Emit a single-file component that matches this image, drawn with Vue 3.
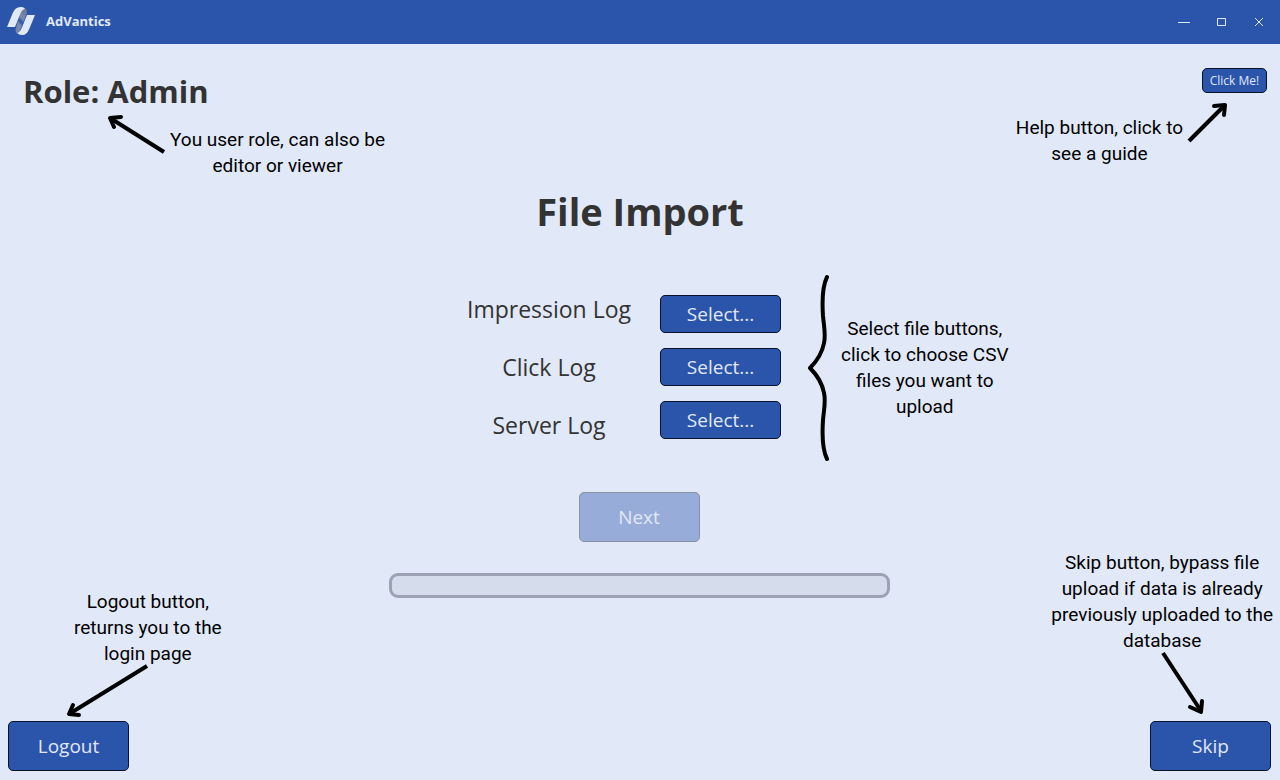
<script setup>
const logs = ['Impression Log', 'Click Log', 'Server Log']
const fileId = (name) => name.toLowerCase().replace(' ', '-')
</script>

<template>
  <div class="app">
    <header class="titlebar">
      <svg class="logo" width="28" height="28" viewBox="0 0 84 84" aria-hidden="true">
        <defs>
          <linearGradient id="fold" x1="0.7" y1="0" x2="0.3" y2="1">
            <stop offset="0" stop-color="#6a7892" />
            <stop offset="0.35" stop-color="#7c8bae" />
            <stop offset="0.52" stop-color="#2a55ab" />
            <stop offset="0.65" stop-color="#7c8bae" />
            <stop offset="1" stop-color="#7583a2" />
          </linearGradient>
        </defs>
        <path d="M42 8 L53 4 Q62 8 59 21 L41 66 Q37 78 44 84 L31 80 Q23 74 27 62 Z" fill="url(#fold)" />
        <path d="M0 60 L17 19 Q25 0 40 0 L45 0 Q52 1 54 6 Q45 8 40 20 L24 60 Z" fill="#e1e8f7" />
        <path d="M84 24 L67 65 Q59 84 46 84 Q36 84 31 78 Q39 76 44 64 L60 24 Z" fill="#e1e8f7" />
      </svg>
      <span class="brand">AdVantics</span>
      <div class="window-controls">
        <button type="button" aria-label="Minimize">
          <svg width="12" height="12" viewBox="0 0 12 12"><path d="M0 7.5H12" /></svg>
        </button>
        <button type="button" aria-label="Maximize">
          <svg width="12" height="12" viewBox="0 0 12 12"><path d="M1.5 3.5h8v7h-8z" /></svg>
        </button>
        <button type="button" aria-label="Close">
          <svg width="12" height="12" viewBox="0 0 12 12"><path d="M1 3l8 8M9 3l-8 8" /></svg>
        </button>
      </div>
    </header>

    <main class="page">
      <div class="top-row">
        <div class="anchor">
          <h2 class="role">Role: Admin</h2>
          <div class="note role-note">
            <svg width="60" height="42" viewBox="0 0 60 42" aria-hidden="true">
              <path class="shaft" d="M58 39L4 5" />
              <path class="head" d="M15 4L4 5L8 14" />
            </svg>
            <p>You user role, can also be<br />editor or viewer</p>
          </div>
        </div>
        <div class="anchor">
          <button type="button" class="btn help">Click Me!</button>
          <div class="note help-note">
            <p>Help button, click to<br />see a guide</p>
            <svg width="42" height="42" viewBox="0 0 42 42" aria-hidden="true">
              <path class="shaft" d="M2 40L38 4" />
              <path class="head" d="M27 5L38 4L37 14" />
            </svg>
          </div>
        </div>
      </div>

      <h1 class="title">File Import</h1>

      <form class="import" @submit.prevent>
        <div class="labels">
          <label v-for="log in logs" :key="log" :for="fileId(log)">{{ log }}</label>
        </div>
        <div class="selectors anchor">
          <button v-for="log in logs" :id="fileId(log)" :key="log" type="button" class="btn select">Select...</button>
          <div class="note select-note">
            <svg width="22" height="188" viewBox="0 0 22 188" aria-hidden="true">
              <path
                class="brace"
                d="M19 3C14 13 14 27 15 42C16 53 18 61 16 69C14 80 9 87 2 94C9 101 14 108 16 119C18 127 16 135 15 146C14 161 14 175 19 185"
              />
            </svg>
            <p>Select file buttons,<br />click to choose CSV<br />files you want to<br />upload</p>
          </div>
        </div>
      </form>

      <button type="button" class="btn tall" disabled>Next</button>
      <div class="progress" role="progressbar" aria-label="Upload progress" aria-valuenow="0"></div>

      <footer class="bottom-row">
        <div class="anchor">
          <button type="button" class="btn tall">Logout</button>
          <div class="note logout-note">
            <p>Logout button,<br />returns you to the<br />login page</p>
            <svg width="84" height="54" viewBox="0 0 84 54" aria-hidden="true">
              <path class="shaft" d="M82 2L4 50" />
              <path class="head" d="M8 41L4 50L14 51" />
            </svg>
          </div>
        </div>
        <div class="anchor">
          <button type="button" class="btn tall">Skip</button>
          <div class="note skip-note">
            <p>Skip button, bypass file<br />upload if data is already<br />previously uploaded to the<br />database</p>
            <svg width="44" height="64" viewBox="0 0 44 64" aria-hidden="true">
              <path class="shaft" d="M2 2L40 60" />
              <path class="head" d="M29 56L40 61L41 50" />
            </svg>
          </div>
        </div>
      </footer>
    </main>
  </div>
</template>

<style>
body {
  margin: 0;
  background: #e1e8f7;
}
</style>

<style scoped>
.app {
  min-height: 100vh;
  display: flex;
  flex-direction: column;
  background: #e1e8f7;
  color: #333;
  font-family: "Open Sans", "Noto Sans", sans-serif;
}

h1,
h2,
p {
  margin: 0;
}

.titlebar {
  display: flex;
  align-items: center;
  box-sizing: border-box;
  height: 44px;
  padding: 0 8px 2px 7px;
  background: #2a55ab;
  color: #e1e8f7;
}

.brand {
  margin-left: 11px;
  font-size: 13px;
  font-weight: 700;
}

.window-controls {
  display: flex;
  gap: 14px;
  margin-left: auto;
}

.window-controls button {
  display: flex;
  align-items: center;
  justify-content: center;
  width: 24px;
  height: 24px;
  padding: 0;
  border: 0;
  background: none;
}

.window-controls svg {
  fill: none;
  stroke: #e1e8f7;
  stroke-width: 1;
}

.page {
  flex: 1;
  display: flex;
  flex-direction: column;
  align-items: center;
}

.anchor {
  position: relative;
}

.top-row,
.bottom-row {
  display: flex;
  justify-content: space-between;
  align-self: stretch;
}

.top-row {
  padding: 24px 13px 0 23px;
}

.role {
  font-size: 31px;
  line-height: 47px;
  font-weight: 700;
}

.btn {
  display: block;
  box-sizing: border-box;
  width: 121px;
  padding: 0;
  border: 1px solid #0a122a;
  border-radius: 5px;
  background: #2a55ab;
  color: #e1e8f7;
  font-family: inherit;
  font-size: 19px;
}

.btn:disabled {
  opacity: 0.4;
}

.help {
  width: 65px;
  height: 25px;
  font-size: 12px;
}

.select {
  height: 38px;
}

.tall {
  height: 50px;
}

.title {
  margin-top: 68px;
  font-size: 38px;
  line-height: 56px;
  font-weight: 700;
}

.import {
  display: flex;
  gap: 29px;
  margin-top: 54px;
  margin-right: 32px;
}

.labels {
  display: flex;
  flex-direction: column;
  align-items: center;
  gap: 25px;
  font-size: 23px;
  line-height: 33px;
}

.selectors {
  display: flex;
  flex-direction: column;
  gap: 15px;
  margin-top: 2px;
}

.page > .tall {
  margin-top: 50px;
}

.page > .tall,
.progress {
  margin-right: 2px;
}

.progress {
  box-sizing: border-box;
  width: 501px;
  max-width: 90%;
  height: 25px;
  margin-top: 31px;
  border: 3px solid #9ca1b4;
  border-radius: 9px;
  background: #d5dceb;
}

.bottom-row {
  margin-top: auto;
  padding: 0 9px 9px 8px;
}

.note {
  position: absolute;
  display: flex;
  color: #000;
  font-family: Roboto, sans-serif;
  font-size: 19px;
  line-height: 26px;
  text-align: center;
  white-space: nowrap;
}

.note svg {
  flex: none;
  fill: none;
  stroke: #000;
  stroke-width: 4;
  stroke-linejoin: round;
}

.head,
.brace {
  stroke-linecap: round;
}

.role-note {
  top: 45px;
  left: 83px;
  gap: 4px;
}

.role-note p,
.help-note p {
  padding-top: 14px;
}

.help-note {
  top: 33px;
  right: 38px;
  gap: 4px;
}

.select-note {
  top: -21px;
  left: 148px;
  align-items: center;
  gap: 11px;
}

.logout-note,
.skip-note {
  flex-direction: column;
}

.logout-note {
  bottom: 53px;
  left: 66px;
}

.logout-note svg,
.skip-note svg {
  margin-top: -3px;
}

.logout-note svg {
  margin-left: -9px;
}

.skip-note {
  right: -2px;
  bottom: 56px;
}

.skip-note svg {
  margin-left: 110px;
}
</style>
